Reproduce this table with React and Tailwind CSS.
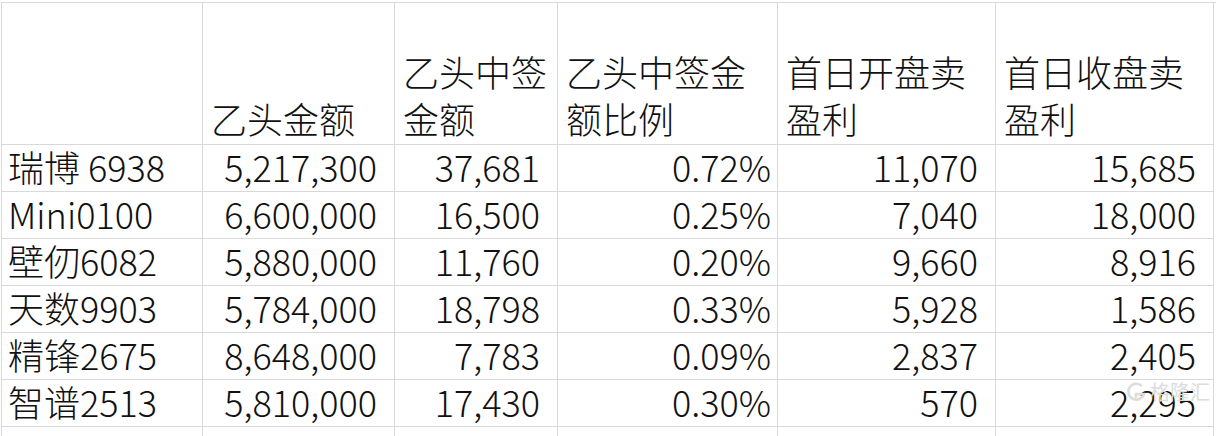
import React from 'react'

const font = {fontFamily: '"Noto Sans CJK SC", "Noto Sans", sans-serif'}

const cols = [
    {label: '', align: 'left'},
    {label: '乙头金额', align: 'right', pad: 'pr-[17px]'},
    {label: '乙头中签\n金额', align: 'right', pad: 'pr-[17px]'},
    {label: '乙头中签金\n额比例', align: 'right', pad: 'pr-[6px]'},
    {label: '首日开盘卖\n盈利', align: 'right', pad: 'pr-[17px]'},
    {label: '首日收盘卖\n盈利', align: 'right', pad: 'pr-[17px]'},
]

const rows = [
    ['瑞博 6938', '5,217,300', '37,681', '0.72%', '11,070', '15,685'],
    ['Mini0100', '6,600,000', '16,500', '0.25%', '7,040', '18,000'],
    ['壁仞6082', '5,880,000', '11,760', '0.20%', '9,660', '8,916'],
    ['天数9903', '5,784,000', '18,798', '0.33%', '5,928', '1,586'],
    ['精锋2675', '8,648,000', '7,783', '0.09%', '2,837', '2,405'],
    ['智谱2513', '5,810,000', '17,430', '0.30%', '570', '2,295'],
    ['', '', '', '', '', ''],
]

export default function App() {
    return (
        <div className="relative w-[1216px] h-[436px] overflow-hidden bg-white text-[#111] pl-[1px] pt-[2px]" style={font}>
            <div className="grid grid-cols-[201px_192px_163px_220px_218px_218px] border-l border-t border-[#d9d9d9] text-[36px] leading-[47px] font-light">
                {cols.map((c, i) => (
                    <div key={i} className="h-[142px] border-r border-b border-[#d9d9d9] flex items-end pl-[8px] pb-[2px] whitespace-pre-line">
                        {c.label}
                    </div>
                ))}
                {rows.map((r, ri) => r.map((v, ci) => (
                    <div key={ri + '-' + ci}
                         className={'h-[47px] border-r border-b border-[#d9d9d9] flex items-end pb-[1px] whitespace-nowrap ' +
                             (ci === 0 ? 'pl-[6px]' : 'justify-end ' + cols[ci].pad)}>
                        {v}
                    </div>
                )))}
            </div>
            {/* watermark */}
            <div className="absolute right-[6px] top-[381px] flex items-center gap-[3px] text-[#dcdcdc] text-[20px] leading-none">
                <svg width="22" height="22" viewBox="0 0 22 22" fill="none" stroke="#dcdcdc" strokeWidth="2.5">
                    <path d="M17 5 A8 8 0 1 0 19 13 L11 13 L11 17"/>
                </svg>
                <span>格隆汇</span>
            </div>
        </div>
    )
}
